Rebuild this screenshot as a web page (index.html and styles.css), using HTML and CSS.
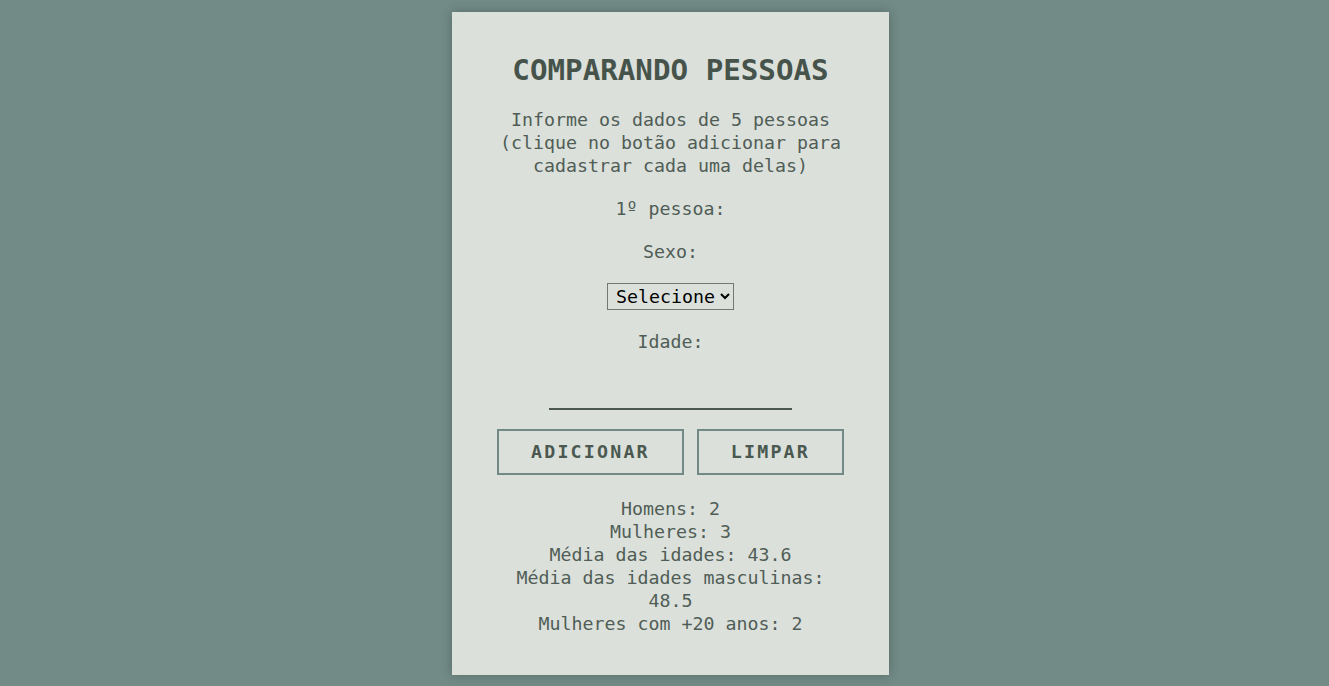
FILE: index.html
```html
<!DOCTYPE html>
<html lang="pt-BR">
<head>
<meta charset="utf-8">
<title>Comparando Pessoas</title>
<link rel="stylesheet" href="styles.css">
</head>
<body>
<main class="card">
  <h1 class="title">COMPARANDO PESSOAS</h1>
  <p class="intro">Informe os dados de 5 pessoas (clique no botão adicionar para cadastrar cada uma delas)</p>
  <p class="label">1º pessoa:</p>
  <p class="label">Sexo:</p>
  <select class="select">
    <option>Selecione</option>
    <option>Masculino</option>
    <option>Feminino</option>
  </select>
  <p class="label">Idade:</p>
  <input class="age" type="number">
  <div class="actions">
    <button class="btn">ADICIONAR</button>
    <button class="btn">LIMPAR</button>
  </div>
  <div class="results">
    <div>Homens: 2</div>
    <div>Mulheres: 3</div>
    <div>Média das idades: 43.6</div>
    <div>Média das idades masculinas: 48.5</div>
    <div>Mulheres com +20 anos: 2</div>
  </div>
</main>
</body>
</html>
```
FILE: styles.css
```css
html, body {
  height: 100%;
}
body {
  margin: 0;
  padding: 12px 0 0 12px;
  box-sizing: border-box;
  background: #728b86;
  font-family: "DejaVu Sans Mono", "Liberation Mono", monospace;
  font-size: 18.27px;
  line-height: 23px;
  color: #505d56;
  display: flex;
  justify-content: center;
  align-items: flex-start;
}
.card {
  width: 437px;
  box-sizing: border-box;
  background: #dbe0db;
  padding: 16px 40px 20px;
  text-align: center;
  box-shadow: 0 0 10px rgba(0, 0, 0, 0.25);
}
.title {
  margin: 24px 0 19px;
  font-size: 29.2px;
  line-height: 37px;
  font-weight: bold;
  color: #46534b;
}
.intro {
  margin: 0 0 20px;
}
.label {
  margin: 0 0 20px;
}
.select {
  display: block;
  margin: 0 auto 20px;
  width: 127px;
  height: 27px;
  box-sizing: border-box;
  font-family: inherit;
  font-size: 18.27px;
  color: #000;
  background: transparent;
  border: 1px solid #767676;
  border-radius: 0;
  padding: 0 2px 0 4px;
}
.age {
  display: block;
  margin: 2px auto 0;
  width: 243px;
  height: 37px;
  box-sizing: border-box;
  border: none;
  border-bottom: 2px solid #4a5850;
  background: transparent;
  font-family: inherit;
  font-size: 18.27px;
  text-align: center;
  color: #46534b;
  outline: none;
}
.actions {
  display: flex;
  justify-content: center;
  gap: 13px;
  margin: 19px 0 22px;
}
.btn {
  padding: 10px 32px;
  border: 2px solid #728b86;
  background: transparent;
  font-family: inherit;
  font-size: 18.27px;
  line-height: 22px;
  font-weight: bold;
  letter-spacing: 2.2px;
  color: #4a5850;
  cursor: pointer;
}
.results {
  margin: 0 0 20px;
}
```
